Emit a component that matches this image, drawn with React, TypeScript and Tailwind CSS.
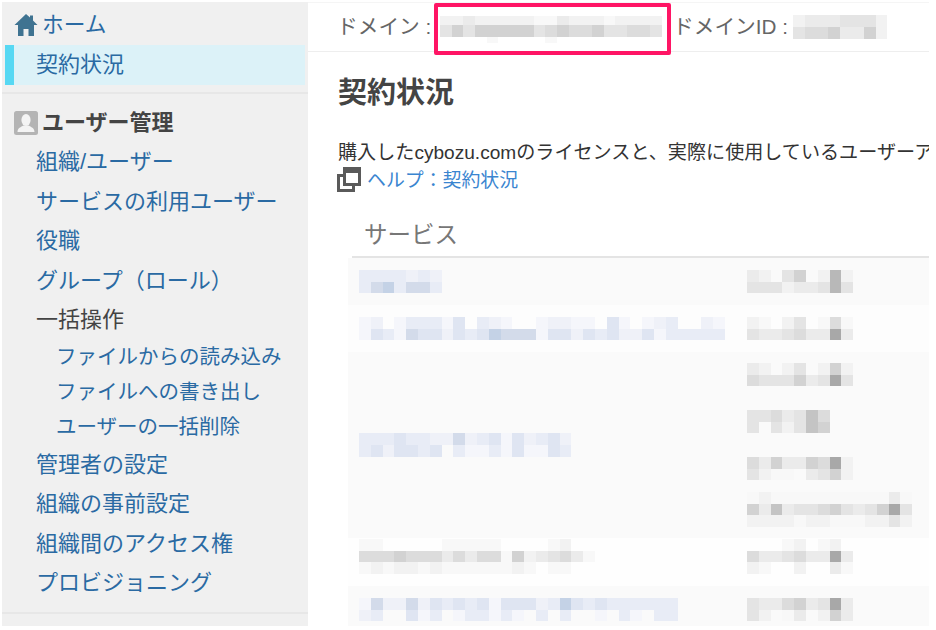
import React from "react";

const PAL: Record<string, string> = {
  ".": "bg-transparent",
  "1": "bg-[#f8f8f8]",
  "2": "bg-[#f2f2f2]",
  "3": "bg-[#ebebeb]",
  "4": "bg-[#e4e4e4]",
  "5": "bg-[#dcdcdc]",
  "6": "bg-[#d2d2d2]",
  "7": "bg-[#c4c4c4]",
  "8": "bg-[#b8b8b8]",
  "9": "bg-[#a8a8a8]",
  a: "bg-[#f5f6fb]",
  b: "bg-[#eff1f8]",
  c: "bg-[#e8ecf6]",
  d: "bg-[#dfe5f2]",
  e: "bg-[#d3dbea]",
  f: "bg-[#c4d2e6]",
};

function Mosaic({ lines }: { lines: string[] }) {
  return (
    <div className="flex flex-col">
      {lines.map((line, i) => (
        <div key={i} className="flex h-[11.7px]">
          {line.split("").map((c, j) => (
            <div key={j} className={`w-[11.8px] shrink-0 ${PAL[c]}`} />
          ))}
        </div>
      ))}
    </div>
  );
}

function Item({ children, link = true }: { children: React.ReactNode; link?: boolean }) {
  return (
    <div className={`flex h-[39.5px] items-center pl-[34px] ${link ? "text-[#2a6aa3]" : "text-[#444444]"}`}>
      {children}
    </div>
  );
}

function Sub({ children }: { children: React.ReactNode }) {
  return <div className="flex h-[35px] items-center pl-[54px] text-[20.5px] text-[#2a6aa3]">{children}</div>;
}

function HomeIcon() {
  return (
    <svg viewBox="0 0 24 24" className="h-[24px] w-[24px] shrink-0">
      <path
        d="M12 1 L16 4.6 V2.5 H19 V7.4 L23.5 12 H20 V23 H14.5 V16 H9.5 V23 H4 V12 H0.5 Z"
        fill="#3f7391"
      />
    </svg>
  );
}

function UserIcon() {
  return (
    <svg viewBox="0 0 24 24" className="h-[24px] w-[24px] shrink-0">
      <rect x="0" y="0" width="24" height="24" rx="2.5" fill="#b4b4b4" />
      <ellipse cx="12" cy="9" rx="4.6" ry="6" fill="#f4f4f4" />
      <path d="M3.5 21 C3.5 17 7 16 9.5 14.5 H14.5 C17 16 20.5 17 20.5 21 Z" fill="#f4f4f4" />
    </svg>
  );
}

function HelpIcon() {
  return (
    <svg viewBox="0 0 24 25" className="mb-[5px] ml-[-1px] h-[25px] w-[24px] shrink-0">
      <path d="M6 0 H24 V19 H18 V25 H0 V7 H6 Z" fill="#5a5a5a" />
      <rect x="9" y="6" width="12" height="10" fill="#ffffff" />
      <path d="M3 10 H6 V19 H15 V22 H3 Z" fill="#ffffff" />
    </svg>
  );
}

function Band({ tone, className = "", children }: { tone: "a" | "b" | "c"; className?: string; children: React.ReactNode }) {
  const bg = tone === "a" ? "bg-[#fafafa]" : tone === "b" ? "bg-[#fdfdfd]" : "bg-[#fefefe]";
  return <div className={`ml-[-4px] flex pl-[11px] ${bg} ${className}`}>{children}</div>;
}

function Left({ children, center = false, pt = "" }: { children: React.ReactNode; center?: boolean; pt?: string }) {
  return <div className={`flex w-[388px] shrink-0 ${center ? "items-center" : "items-start"} ${pt}`}>{children}</div>;
}

export default function App() {
  return (
    <div className="h-[630px] w-[936px] overflow-hidden bg-white pl-[2px] pt-[2px] font-['Liberation_Sans','Noto_Sans_CJK_JP',sans-serif]">
      <div className="flex h-[624px] w-[927px] overflow-hidden">
        <aside className="flex w-[306px] shrink-0 flex-col bg-[#f0f0f0] pt-[3.5px] text-[22px] leading-none">
          <div className="flex h-[39.5px] items-center pl-[12px] text-[#2a6aa3]">
            <HomeIcon />
            <span className="ml-[4px] text-[21.7px]">ホーム</span>
          </div>
          <div className="mx-[3px] flex h-[40px] items-center bg-[#dcf2f8] text-[#2a6aa3]">
            <div className="h-full w-[9px] bg-[#57d8f3]" />
            <span className="ml-[22px]">契約状況</span>
          </div>
          <div className="mt-[7px] h-[2px] bg-[#e7e7e7]" />
          <div className="mt-[9px] flex h-[39.5px] items-center pl-[12px] font-bold text-[#444444]">
            <UserIcon />
            <span className="ml-[4px]">ユーザー管理</span>
          </div>
          <Item>組織/ユーザー</Item>
          <Item>サービスの利用ユーザー</Item>
          <Item>役職</Item>
          <Item>グループ（ロール）</Item>
          <Item link={false}>一括操作</Item>
          <Sub>ファイルからの読み込み</Sub>
          <Sub>ファイルへの書き出し</Sub>
          <Sub>ユーザーの一括削除</Sub>
          <Item>管理者の設定</Item>
          <Item>組織の事前設定</Item>
          <Item>組織間のアクセス権</Item>
          <Item>プロビジョニング</Item>
          <div className="mt-[8.5px] h-[2px] bg-[#e7e7e7]" />
        </aside>

        <main className="min-w-0 flex-1 overflow-hidden">
          <header className="flex h-[50px] items-center border-y border-t-[#f5f5f5] border-b-[#eeeeee] pl-[29px] text-[20.7px] leading-none whitespace-nowrap text-[#666666]">
            <span className="w-[97px] shrink-0">ドメイン :</span>
            <div className="relative z-10 mt-[4px] h-[52px] w-[237px] shrink-0 rounded-[2px] border-[4px] border-[#ff1565] pl-[2px] pt-[9px]">
              <div className="flex h-[9px]">
                {"2232222211322212222".split("").map((c, i) => (
                  <div key={i} className={`w-[11.7px] shrink-0 ${PAL[c]}`} />
                ))}
              </div>
              <div className="flex h-[12px]">
                {"4646666645655644554".split("").map((c, i) => (
                  <div key={i} className={`w-[11.7px] shrink-0 ${PAL[c]}`} />
                ))}
              </div>
              <div className="flex h-[6px]">
                {"....1....1.........".split("").map((c, i) => (
                  <div key={i} className={`w-[11.7px] shrink-0 ${PAL[c]}`} />
                ))}
              </div>
            </div>
            <span className="ml-[2px] w-[120px] shrink-0">ドメインID :</span>
            <Mosaic lines={["23334442", "45563362"]} />
          </header>

          <div className="pl-[30px]">
            <h1 className="mt-[21px] h-[40px] text-[29px] leading-[40px] font-bold whitespace-nowrap text-[#444444]">契約状況</h1>
            <p className="mt-[25px] h-[29px] text-[19.1px] leading-[29px] whitespace-nowrap text-[#333333]">
              購入したcybozu.comのライセンスと、実際に使用しているユーザーアカウント数を確認できます。
            </p>
            <div className="flex h-[29px] items-center text-[18.9px] leading-none text-[#3a85d0]">
              <HelpIcon />
              <span className="ml-[6px]">ヘルプ：契約状況</span>
            </div>

            <div className="ml-[14px] mt-[20px]">
              <div className="flex h-[42px] items-center border-b-2 border-[#e4e4e4] pl-[12px] text-[23.5px] leading-none text-[#777777]">
                サービス
              </div>
              <Band tone="a" className="h-[47px]">
                <Left pt="pt-[12px]">
                  <Mosaic lines={["ccccbcb", "cefceec"]} />
                </Left>
                <div className="pt-[12px]">
                  <Mosaic lines={["32.46.282", "444233484"]} />
                </div>
              </Band>
              <Band tone="b" className="h-[47px]">
                <Left pt="pt-[12px]">
                  <Mosaic lines={["ab.acccad.cba..abbaa.da.abc..ba", "adcaeddbdcdfeeeaddbdcdbbdaccccc"]} />
                </Left>
                <div className="pt-[12px]">
                  <Mosaic lines={["21.24.151", "433453393"]} />
                </div>
              </Band>
              <Band tone="a" className="h-[186px]">
                <Left center>
                  <Mosaic lines={["cccdccbbebcdadbcdb", "cdbddcd.caacadaadc"]} />
                </Left>
                <div className="flex flex-col pt-[11px]">
                  <Mosaic lines={["32.24.262", "544463494"]} />
                  <div className="mt-[23.6px]">
                    <Mosaic lines={["4453475", "4.42476"]} />
                  </div>
                  <div className="mt-[23.6px]">
                    <Mosaic lines={["536336592", "4211.3462"]} />
                  </div>
                  <div className="mt-[11.6px]">
                    <Mosaic lines={["12111111111131", "63734456434694", "22221221112242"]} />
                  </div>
                </div>
              </Band>
              <Band tone="c" className="h-[48px]">
                <Left pt="pt-[1px]">
                  <Mosaic lines={["11.....11111....12", "55565553535516234531", "121221211111121.11"]} />
                </Left>
                <div className="pt-[1px]">
                  <Mosaic lines={["...12.12.", "533453393", "21..2..31"]} />
                </div>
              </Band>
              <Band tone="a" className="h-[40px]">
                <Left pt="pt-[12px]">
                  <Mosaic lines={["aebbebdcdcdadddbcfdcdcccccc", "bc..dac.accaca.c.c..a.ca.cc"]} />
                </Left>
                <div className="pt-[12px]">
                  <Mosaic lines={["433563493", "42.13.263"]} />
                </div>
              </Band>
            </div>
          </div>
        </main>
      </div>
    </div>
  );
}
